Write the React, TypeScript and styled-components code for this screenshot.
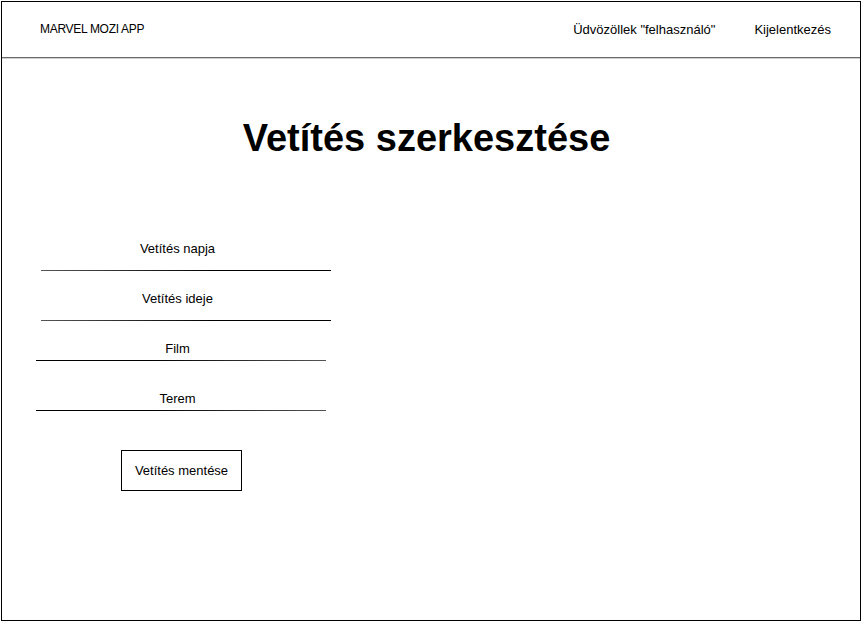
import styled, { createGlobalStyle } from 'styled-components'

const GlobalStyle = createGlobalStyle`
  html, body {
    margin: 0;
    padding: 0;
    background: #fff;
  }
  body {
    font-family: 'Liberation Sans', Arial, sans-serif;
    color: #000;
  }
`

type Field = {
  label: string
  indent: number
  labelShift: number
  lineGap: number
  fade: 'left' | 'right'
}

const fields: Field[] = [
  { label: 'Vetítés napja', indent: 39, labelShift: 17, lineGap: 13, fade: 'left' },
  { label: 'Vetítés ideje', indent: 39, labelShift: 17, lineGap: 13, fade: 'left' },
  { label: 'Film', indent: 34, labelShift: 7, lineGap: 3, fade: 'right' },
  { label: 'Terem', indent: 34, labelShift: 7, lineGap: 3, fade: 'right' },
]

const App = () => {
  return (
    <>
      <GlobalStyle />
      <Frame>
        <Header>
          <Brand>MARVEL MOZI APP</Brand>
          <Nav>
            <NavText>Üdvözöllek "felhasználó"</NavText>
            <NavText>Kijelentkezés</NavText>
          </Nav>
        </Header>
        <Main>
          <Title>Vetítés szerkesztése</Title>
          <Form>
            {fields.map((f) => (
              <FieldRow key={f.label} $indent={f.indent}>
                <Label $shift={f.labelShift}>{f.label}</Label>
                <Underline $gap={f.lineGap} $fade={f.fade} />
              </FieldRow>
            ))}
            <SaveButton type="button">Vetítés mentése</SaveButton>
          </Form>
        </Main>
      </Frame>
    </>
  )
}

export default App

const Frame = styled.div`
  box-sizing: border-box;
  width: 860px;
  height: 620px;
  margin: 1px 0 0 1px;
  border: 1px solid #000;
  display: flex;
  flex-direction: column;
`

const Header = styled.header`
  height: 56px;
  flex-shrink: 0;
  display: flex;
  align-items: center;
  justify-content: space-between;
  padding: 0 29px 1px 38px;
  box-sizing: border-box;
  border-bottom: 1px solid #6b6b6b;
  box-shadow: 0 1px 0 #cfcfcf;
`

const Brand = styled.div`
  font-size: 12px;
  line-height: 14px;
  letter-spacing: -0.3px;
`

const Nav = styled.nav`
  display: flex;
  gap: 39px;
`

const NavText = styled.span`
  font-size: 13px;
  line-height: 15px;
`

const Main = styled.main`
  flex: 1;
  display: flex;
  flex-direction: column;
`

const Title = styled.h1`
  margin: 59px 0 0;
  padding-right: 9px;
  font-size: 38px;
  line-height: 42px;
  font-weight: bold;
  text-align: center;
`

const Form = styled.form`
  margin-top: 82px;
  display: flex;
  flex-direction: column;
`

const FieldRow = styled.div<{ $indent: number }>`
  height: 50px;
  width: 290px;
  margin-left: ${(p) => p.$indent}px;
  display: flex;
  flex-direction: column;
`

const Label = styled.label<{ $shift: number }>`
  font-size: 13px;
  line-height: 16px;
  text-align: center;
  padding-right: ${(p) => p.$shift}px;
`

const Underline = styled.div<{ $gap: number; $fade: 'left' | 'right' }>`
  margin-top: ${(p) => p.$gap}px;
  height: 1px;
  background: ${(p) =>
    p.$fade === 'left'
      ? 'linear-gradient(to right, #555, #000 60%)'
      : 'linear-gradient(to right, #000 40%, #555)'};
`

const SaveButton = styled.button`
  margin: 9px 0 0 119px;
  width: 121px;
  height: 41px;
  box-sizing: border-box;
  border: 1px solid #000;
  background: #fff;
  padding: 0;
  font-family: 'Liberation Sans', Arial, sans-serif;
  font-size: 13px;
  color: #000;
  cursor: pointer;
`
